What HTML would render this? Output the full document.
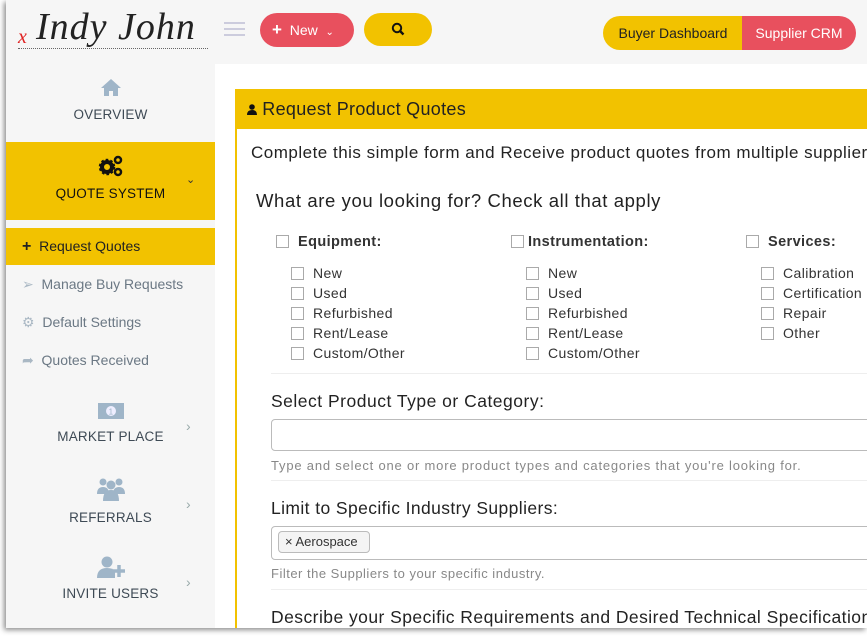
<!DOCTYPE html>
<html><head><meta charset="utf-8"><style>
*{box-sizing:border-box;margin:0;padding:0}
body{width:867px;height:636px;overflow:hidden;background:#fff;font-family:"Liberation Sans",sans-serif;position:relative}
.win{position:absolute;left:6px;top:0;width:861px;height:628px;background:#f6f6f6;box-shadow:-2px 2px 5px rgba(0,0,0,.45);overflow:hidden}
.abs{position:absolute}
.main{position:absolute;left:209px;top:64px;right:0;bottom:0;background:#fff}
.panel{position:absolute;left:20px;top:25px;width:700px;bottom:0;border-left:2px solid #f2c200}
.ph{height:40px;background:#f2c200;color:#222;font-size:18px;line-height:40px;padding-left:10px;letter-spacing:.3px}
.nav{position:absolute;left:0;width:209px;text-align:center;color:#3e4a55;font-size:13.5px;letter-spacing:.2px}
.sub{position:absolute;left:0;width:209px;height:37px;line-height:37px;font-size:14px;color:#6b7884;padding-left:16px}
.cb{display:inline-block;width:13px;height:13px;border:1px solid #aaa;background:#fff;vertical-align:-2px;margin-right:9px}
.t{position:absolute;font-size:14px;color:#333;letter-spacing:.4px}
.chev{position:absolute;left:180px;color:#9aa;font-size:14px}
</style></head><body>
<div class="win">
 <div class="abs" style="left:12px;top:26px;color:#e02020;font-family:'Liberation Serif',serif;font-style:italic;font-size:20px">x</div>
 <div class="abs" style="left:30px;top:5px;color:#222;font-family:'Liberation Serif',serif;font-style:italic;font-size:38px;letter-spacing:1px">Indy John</div>
 <div class="abs" style="left:12px;top:48px;width:190px;border-top:1px dotted #666"></div>
 <div class="abs" style="left:218px;top:22px;width:21px;height:2px;background:#ccd;box-shadow:0 6px 0 #ccd,0 12px 0 #ccd"></div>
 <div class="abs" style="left:254px;top:13px;width:94px;height:34px;border-radius:17px;background:#e8505e;color:#fff;font-size:14px;line-height:34px;padding-left:12px"><b style="font-size:17px">+</b>&nbsp; New &nbsp;<span style="font-size:10px">⌄</span></div>
 <div class="abs" style="left:358px;top:13px;width:68px;height:33px;border-radius:17px;background:#f2c200;text-align:center;line-height:33px">
  <svg width="14" height="14" viewBox="0 0 14 14" style="vertical-align:-2px"><circle cx="6" cy="6" r="4.2" fill="none" stroke="#111" stroke-width="2"/><path d="M9 9l3.5 3.5" stroke="#111" stroke-width="2.4"/></svg></div>
 <div class="abs" style="left:597px;top:16px;width:140px;height:34px;border-radius:17px 0 0 17px;background:#f2c200;color:#222;font-size:14px;line-height:34px;text-align:center">Buyer Dashboard</div>
 <div class="abs" style="left:736px;top:16px;width:114px;height:34px;border-radius:0 17px 17px 0;background:#e8505e;color:#fff;font-size:14px;line-height:34px;text-align:center">Supplier CRM</div>

 <div class="nav" style="top:78px"><svg width="22" height="18" viewBox="0 0 22 18"><path d="M11 1L1 10h3v8h5v-5h4v5h5v-8h3z" fill="#9fb5c8"/></svg><div style="margin-top:8px">OVERVIEW</div></div>
 <div class="abs" style="left:0;top:142px;width:209px;height:78px;background:#f2c200"></div>
 <div class="nav" style="top:155px;color:#111"><svg width="26" height="22" viewBox="0 0 26 22"><circle cx="9" cy="12" r="5" fill="none" stroke="#111" stroke-width="4"/><circle cx="9" cy="12" r="7" fill="none" stroke="#111" stroke-width="2.5" stroke-dasharray="2.5 2"/><circle cx="20" cy="5" r="3" fill="none" stroke="#111" stroke-width="2.5"/><circle cx="20" cy="17" r="3" fill="none" stroke="#111" stroke-width="2.5"/></svg><div style="margin-top:6px">QUOTE SYSTEM</div></div>
 <div class="chev" style="top:173px;color:#333;font-size:11px">⌄</div>
 <div class="sub" style="top:228px;background:#f2c200;color:#222"><b style="font-size:16px">+</b>&nbsp; Request Quotes</div>
 <div class="sub" style="top:266px"><span style="color:#aab8c4">➢</span>&nbsp; Manage Buy Requests</div>
 <div class="sub" style="top:304px"><span style="color:#aab8c4">⚙</span>&nbsp; Default Settings</div>
 <div class="sub" style="top:342px"><span style="color:#aab8c4">➦</span>&nbsp; Quotes Received</div>
 <div class="nav" style="top:402px"><svg width="28" height="18" viewBox="0 0 28 18"><rect x="1" y="1" width="26" height="16" fill="#9fb5c8"/><circle cx="14" cy="9" r="5" fill="#eef"/><text x="14" y="12.5" font-size="8" text-anchor="middle" fill="#9fb5c8" font-family="Liberation Sans">1</text></svg><div style="margin-top:6px">MARKET PLACE</div></div>
 <div class="chev" style="top:418px">›</div>
 <div class="nav" style="top:477px"><svg width="28" height="24" viewBox="0 0 28 24"><circle cx="6" cy="5" r="3.5" fill="#9fb5c8"/><circle cx="22" cy="5" r="3.5" fill="#9fb5c8"/><circle cx="14" cy="8" r="4.5" fill="#9fb5c8"/><path d="M0 17q0-7 6-7q6 0 6 7zM16 17q0-7 6-7q6 0 6 7zM6 24q0-11 8-11q8 0 8 11z" fill="#9fb5c8"/></svg><div style="margin-top:6px">REFERRALS</div></div>
 <div class="chev" style="top:496px">›</div>
 <div class="nav" style="top:556px"><svg width="30" height="22" viewBox="0 0 30 22"><circle cx="11" cy="6" r="5.5" fill="#9fb5c8"/><path d="M1 22q0-10 10-10q6 0 8 3v7z" fill="#9fb5c8"/><path d="M23 9v12M17 15h12" stroke="#9fb5c8" stroke-width="3.5"/></svg><div style="margin-top:5px">INVITE USERS</div></div>
 <div class="chev" style="top:574px">›</div>

 <div class="main"><div class="panel">
  <div class="ph"><svg width="10" height="11" viewBox="0 0 10 11" style="vertical-align:0"><circle cx="5" cy="3" r="2.8" fill="#111"/><path d="M0 11q0-5 5-5q5 0 5 5z" fill="#111"/></svg> Request Product Quotes</div>
  <div class="t" style="left:14px;top:54px;font-size:17px;white-space:nowrap;color:#222;letter-spacing:.5px">Complete this simple form and Receive product quotes from multiple suppliers</div>
  <div class="t" style="left:19px;top:101px;font-size:18.5px;white-space:nowrap;color:#222;letter-spacing:.6px">What are you looking for? Check all that apply</div>

  <div class="t" style="left:39px;top:145px;font-weight:bold;font-size:14.5px"><span class="cb"></span>Equipment:</div>
  <div class="t" style="left:274px;top:145px;font-weight:bold;font-size:14.5px"><span class="cb" style="margin-right:4px"></span>Instrumentation:</div>
  <div class="t" style="left:509px;top:145px;font-weight:bold;font-size:14.5px"><span class="cb"></span>Services:</div>
  <div class="t" style="left:54px;top:174px;line-height:20px"><span class="cb"></span>New<br><span class="cb"></span>Used<br><span class="cb"></span>Refurbished<br><span class="cb"></span>Rent/Lease<br><span class="cb"></span>Custom/Other</div>
  <div class="t" style="left:289px;top:174px;line-height:20px"><span class="cb"></span>New<br><span class="cb"></span>Used<br><span class="cb"></span>Refurbished<br><span class="cb"></span>Rent/Lease<br><span class="cb"></span>Custom/Other</div>
  <div class="t" style="left:524px;top:174px;line-height:20px;white-space:nowrap"><span class="cb"></span>Calibration<br><span class="cb"></span>Certification<br><span class="cb"></span>Repair<br><span class="cb"></span>Other</div>
  <div class="abs" style="left:34px;top:284px;right:0;border-top:1px solid #eee"></div>
  <div class="t" style="left:34px;top:302px;font-size:17.5px;white-space:nowrap;color:#222;letter-spacing:.5px">Select Product Type or Category:</div>
  <div class="abs" style="left:34px;top:330px;right:-10px;height:32px;border:1px solid #bbb;border-radius:4px"></div>
  <div class="t" style="left:34px;top:369px;font-size:13px;color:#888;white-space:nowrap;letter-spacing:.8px">Type and select one or more product types and categories that you're looking for.</div>
  <div class="abs" style="left:34px;top:391px;right:0;border-top:1px solid #eee"></div>
  <div class="t" style="left:34px;top:409px;font-size:17.5px;white-space:nowrap;color:#222;letter-spacing:.4px">Limit to Specific Industry Suppliers:</div>
  <div class="abs" style="left:34px;top:437px;right:-10px;height:34px;border:1px solid #bbb;border-radius:4px"></div>
  <div class="abs" style="left:41px;top:442px;width:92px;height:22px;border:1px solid #bbb;border-radius:4px;background:#f4f4f4;font-size:13px;line-height:20px;padding-left:6px;color:#333">× Aerospace</div>
  <div class="t" style="left:34px;top:477px;font-size:13px;color:#888;white-space:nowrap;letter-spacing:.5px">Filter the Suppliers to your specific industry.</div>
  <div class="abs" style="left:34px;top:500px;right:0;border-top:1px solid #eee"></div>
  <div class="t" style="left:34px;top:518px;font-size:17.5px;white-space:nowrap;color:#222;letter-spacing:.45px">Describe your Specific Requirements and Desired Technical Specifications</div>
 </div></div>
</div>
</body></html>
